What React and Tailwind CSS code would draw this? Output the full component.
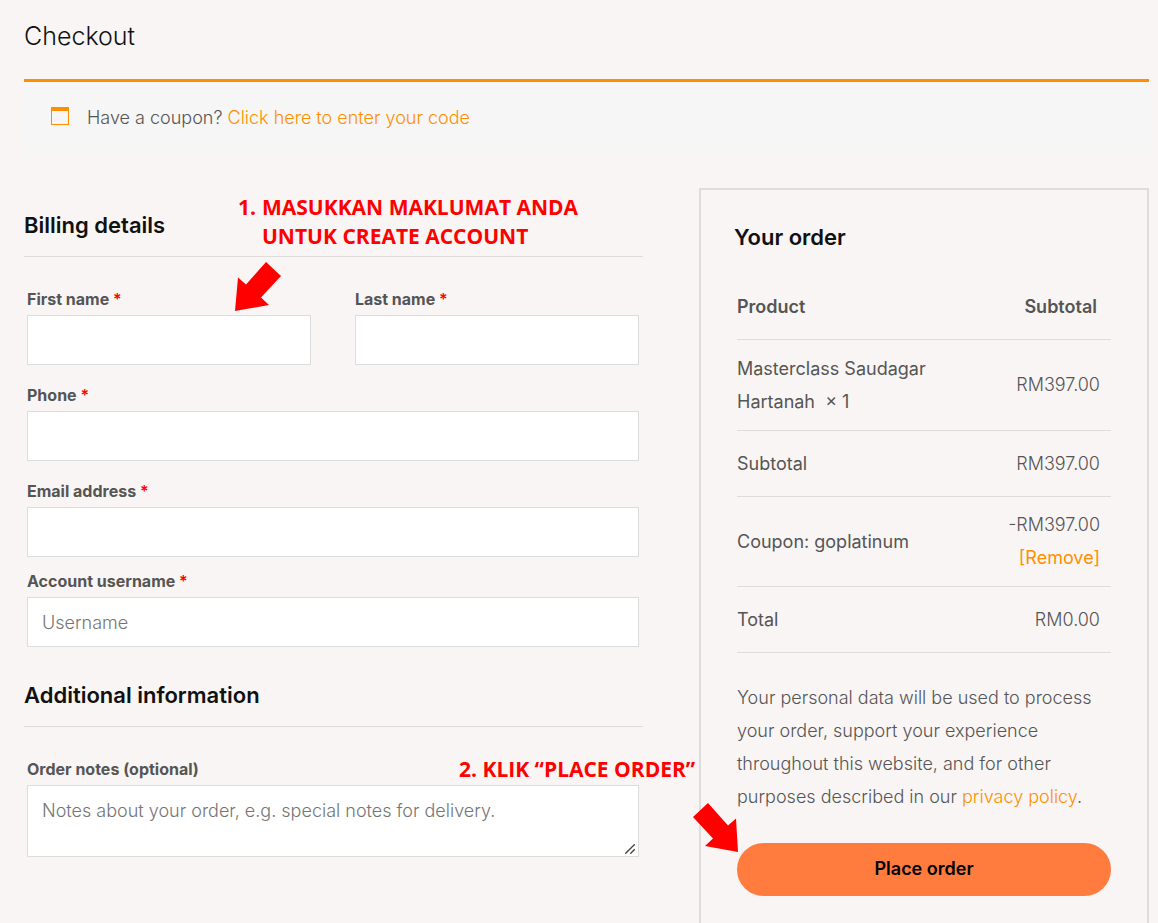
function Required() {
  return <span className="font-semibold text-[#ff0000]">*</span>;
}

function Field({ id, label, required, placeholder, className = "" }) {
  return (
    <div className={`flex flex-col gap-1 ${className}`}>
      <label htmlFor={id} className="text-base leading-6 font-bold">
        {label} {required && <Required />}
      </label>
      <input
        id={id}
        type="text"
        placeholder={placeholder}
        className="h-[50px] w-full border border-[#dddddd] bg-white px-3.5 text-lg font-light placeholder:text-[#757575]"
      />
    </div>
  );
}

function SectionTitle({ children }) {
  return (
    <h2 className="border-b border-[#dddddd] pb-4 text-[22px] leading-[30px] font-semibold text-[#111111]">
      {children}
    </h2>
  );
}

function OrderRow({ label, children, className = "h-[66px]" }) {
  return (
    <tr className={`border-b border-[#dddddd] ${className}`}>
      <td className="text-left">{label}</td>
      <td className="pr-[11px] text-right font-light">{children}</td>
    </tr>
  );
}

export default function App() {
  return (
    <div className="min-h-screen bg-[#f9f5f4] pr-[9px] pl-6 font-['Inter',sans-serif] text-lg leading-[33px] font-normal text-[#555555]">
      <header className="pt-5 pb-[27px]">
        <h1 className="text-[25px] leading-8 font-light text-[#111111]">Checkout</h1>
      </header>

      <div className="flex items-start border-t-[3px] border-[#ff8f00] bg-[#f6f6f6] px-[27px] pt-[19px] pb-[19px] font-light">
        <svg className="mt-1.5 mr-[18px] size-[18px] shrink-0" viewBox="0 0 18 18" aria-hidden="true">
          <rect x="0.5" y="0.5" width="17" height="17" fill="none" stroke="#ff8f00" />
          <rect width="18" height="4" fill="#ff8f00" />
        </svg>
        <p>
          Have a coupon?{" "}
          <a href="#coupon" className="text-[#ff8f00]">
            Click here to enter your code
          </a>
        </p>
      </div>

      <form className="flex items-start justify-between pt-[35px]" onSubmit={(e) => e.preventDefault()}>
        <div className="relative w-[55%] pt-[22px]">
          <SectionTitle>Billing details</SectionTitle>
          <div className="px-[3px] pt-[30px] pr-1">
            <div className="flex gap-11">
              <Field id="first-name" label="First name" required className="flex-1" />
              <Field id="last-name" label="Last name" required className="flex-1" />
            </div>
            <Field id="phone" label="Phone" required className="mt-[18px]" />
            <Field id="email" label="Email address" required className="mt-[18px]" />
            <Field id="username" label="Account username" required placeholder="Username" className="mt-3" />
          </div>

          <div className="mt-[33px]">
            <SectionTitle>Additional information</SectionTitle>
          </div>
          <div className="flex flex-col gap-1 px-[3px] pt-[30px] pr-1">
            <label htmlFor="notes" className="text-base leading-6 font-bold">
              Order notes (optional)
            </label>
            <div className="relative flex">
              <textarea
                id="notes"
                placeholder="Notes about your order, e.g. special notes for delivery."
                className="h-[72px] w-full resize-none border border-[#dddddd] bg-white px-3.5 py-3 text-lg leading-[26px] font-light placeholder:text-[#757575]"
              />
              <svg
                className="pointer-events-none absolute right-1 bottom-[3px] size-[10px]"
                viewBox="0 0 10 10"
                aria-hidden="true"
              >
                <path d="M0.300 9.700L9.700 0.300M5.300 9.700L9.700 5.300" stroke="#444444" strokeWidth="1.400" />
              </svg>
            </div>
          </div>

          <div className="absolute top-[5px] left-[214px] flex gap-1.5 font-['Open_Sans',sans-serif] text-[21px] leading-[29px] font-bold whitespace-nowrap text-[#ff0000]">
            <span>1.</span>
            <p>
              MASUKKAN MAKLUMAT ANDA
              <br />
              UNTUK CREATE ACCOUNT
            </p>
          </div>
          <svg className="absolute top-[74px] left-[211px] h-[49px] w-[46px]" viewBox="0 0 46 49" aria-hidden="true">
            <path d="M31 0L46 14L26 35.500L34 43L0 49L3 15.500L11 22.500Z" fill="#ff0000" />
          </svg>

          <p className="absolute top-[567px] left-[435px] font-['Open_Sans',sans-serif] text-[21px] leading-[29px] font-bold whitespace-nowrap text-[#ff0000]">
            2. KLIK “PLACE ORDER”
          </p>
          <svg className="absolute top-[615px] left-[669px] z-10 h-[49px] w-[46px]" viewBox="0 0 46 49" aria-hidden="true">
            <path d="M15 0L0 14L20 35.500L12 43L45 49L43 15.500L35 22.500Z" fill="#ff0000" />
          </svg>
        </div>

        <section className="w-[40%] border-2 border-[#dddddd] px-9 pt-8 pb-12">
          <h2 className="-ml-[3px] text-[22px] leading-[30px] font-semibold text-[#111111]">Your order</h2>
          <table className="mt-[21px] w-full border-collapse">
            <thead>
              <tr className="h-[66px] border-b border-[#dddddd]">
                <th className="pt-0.5 text-left font-semibold">Product</th>
                <th className="pt-0.5 pr-3.5 text-right font-semibold">Subtotal</th>
              </tr>
            </thead>
            <tbody>
              <OrderRow
                className="h-[91px]"
                label={
                  <>
                    Masterclass Saudagar
                    <br />
                    Hartanah&nbsp; × 1
                  </>
                }
              >
                RM397.00
              </OrderRow>
              <OrderRow label="Subtotal">RM397.00</OrderRow>
              <OrderRow className="h-[90px]" label="Coupon: goplatinum">
                -RM397.00
                <br />
                <a href="#remove" className="font-normal text-[#ff8f00]">
                  [Remove]
                </a>
              </OrderRow>
              <OrderRow label="Total">RM0.00</OrderRow>
            </tbody>
          </table>
          <p className="mt-7 font-light">
            Your personal data will be used to process your order, support your experience throughout this website, and
            for other purposes described in our{" "}
            <a href="#privacy" className="text-[#ff8f00]">
              privacy policy
            </a>
            .
          </p>
          <button
            type="submit"
            className="mt-[30px] h-[53px] w-full rounded-full bg-[#ff7b3e] text-lg font-semibold text-black"
          >
            Place order
          </button>
        </section>
      </form>
    </div>
  );
}
